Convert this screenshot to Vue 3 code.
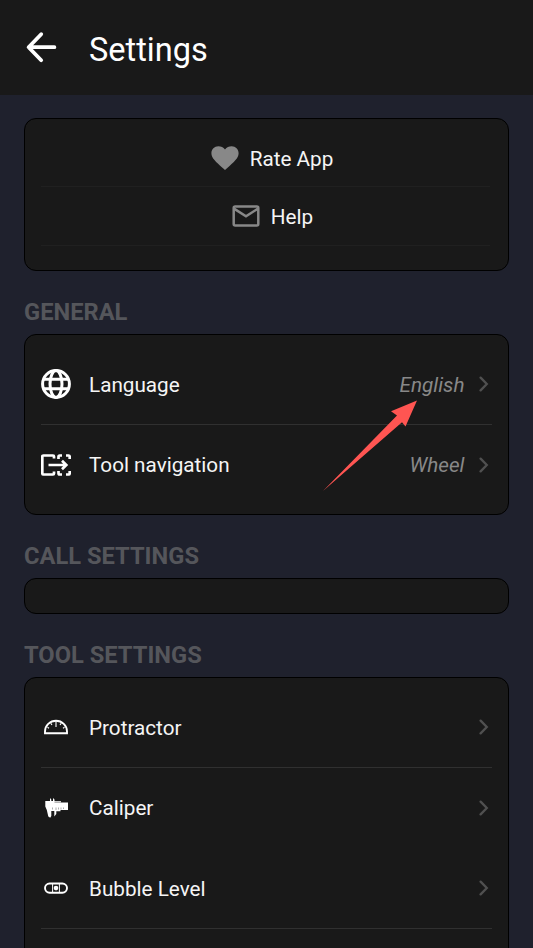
<script setup>
const general = [
  { icon: 'globe', label: 'Language', value: 'English', line: true },
  { icon: 'nav', label: 'Tool navigation', value: 'Wheel', line: false },
]
const tools = [
  { icon: 'protractor', label: 'Protractor', line: true },
  { icon: 'caliper', label: 'Caliper', line: false },
  { icon: 'level', label: 'Bubble Level', line: true },
]
const groups = [
  { title: 'GENERAL', rows: general, cls: 'general' },
  { title: 'CALL SETTINGS', rows: [], cls: 'call' },
  { title: 'TOOL SETTINGS', rows: tools, cls: 'tools' },
]
</script>

<template>
  <div class="screen">
    <header class="bar">
      <svg class="back" width="32" height="32" viewBox="0 0 32 32">
        <path d="M16.2 3.2L3.6 16.2L16.2 29.2M3.8 16.2H29.400" fill="none" stroke="#fff" stroke-width="3.8" stroke-linecap="round" stroke-linejoin="round" />
      </svg>
      <h1>Settings</h1>
    </header>

    <main>
      <section class="card actions">
        <div class="action rate">
          <svg width="28" height="24" viewBox="0 0 28 24">
            <path d="M14 24L12 22.2C4.8 15.7 .4 12 .4 7.2C.4 3.3 3.4 .3 7.4 .3C9.9 .3 12.4 1.500 14 3.400C15.600 1.500 18.100 .3 20.600 .3C24.600 .3 27.600 3.300 27.600 7.200C27.600 12 23.200 15.700 16 22.200Z" fill="#888" />
          </svg>
          <span>Rate App</span>
        </div>
        <div class="action help">
          <svg width="28" height="22" viewBox="0 0 28 22">
            <rect x="1.700" y="1.500" width="24.600" height="18.900" rx="1.500" fill="none" stroke="#888" stroke-width="2.500" />
            <path d="M2 3.600L14 11.200L26 3.600" fill="none" stroke="#888" stroke-width="2.500" />
          </svg>
          <span>Help</span>
        </div>
      </section>

      <template v-for="g in groups" :key="g.title">
        <h2>{{ g.title }}</h2>
        <section class="card" :class="g.cls">
          <div v-for="r in g.rows" :key="r.label" class="row" :class="{ line: r.line }">
            <svg class="icon" width="30" height="30" viewBox="0 0 30 30">
              <g v-if="r.icon === 'globe'" fill="none" stroke="#fff" stroke-width="3">
                <circle cx="15" cy="15" r="13.400" />
                <ellipse cx="15" cy="15" rx="6" ry="13.400" />
                <path d="M2.500 10.300H27.500M2.500 19.700H27.500" />
              </g>
              <g v-else-if="r.icon === 'nav'" fill="none" stroke="#fff" stroke-width="2.700">
                <path d="M13 8.500V6.500Q13 5.500 12 5.500H2.500Q1.300 5.500 1.300 6.700V23.300Q1.300 24.500 2.500 24.500H12Q13 24.500 13 23.500V21.500" />
                <path d="M17.500 9V6.700Q17.500 5.500 18.700 5.500H21M25 5.500H27.500Q28.700 5.500 28.700 6.700V9M28.700 21V23.300Q28.700 24.500 27.500 24.500H25M21 24.500H18.700Q17.500 24.500 17.500 23.300V21" />
                <path d="M7.500 15H25M21 10.800L25.300 15L21 19.200" />
              </g>
              <g v-else-if="r.icon === 'protractor'" fill="none" stroke="#fff">
                <path d="M4 21.200V19.500C4 13.500 9 8.800 15 8.800S26 13.500 26 19.500V21.200Z" stroke-width="1.900" />
                <path d="M15 9V15M9.800 11.200L11 13M20.200 11.200L19 13M6.500 15.300L8 16.200M23.500 15.300L22 16.200" stroke-width="1.100" />
              </g>
              <g v-else-if="r.icon === 'caliper'">
                <path d="M4.300 8H9V5L10.300 6.500V8H12V5L13.500 6.500V8H20V9.600H27V17H19.500V18.300H15.300V21L13.300 23.500V18H10.300V23L9.200 24.800L7.300 23.500L5.800 17L4.300 13.500Z" fill="#fff" />
                <path d="M13.500 9.100H20" stroke="#666" stroke-width=".8" />
                <path d="M11.500 14.500V16.500M15 14.500V17M17.500 14.500V16.500M20 14.500V16.500M22.500 14.500V16" stroke="#888" stroke-width=".7" />
              </g>
              <g v-else fill="none" stroke="#fff">
                <rect x="4" y="10.500" width="22" height="9.200" rx="4.600" stroke-width="1.900" />
                <path d="M11.600 10.500V19.700M18.400 10.500V19.700" stroke-width="1" />
                <circle cx="15" cy="15.100" r="2.300" fill="#fff" stroke="none" />
              </g>
            </svg>
            <span class="label">{{ r.label }}</span>
            <span v-if="r.value" class="value">{{ r.value }}</span>
            <svg class="chev" width="10" height="16" viewBox="0 0 10 16">
              <path d="M1.600 1.600L7.800 8L1.600 14.400" fill="none" stroke="#505050" stroke-width="2.300" stroke-linecap="round" />
            </svg>
          </div>
        </section>
      </template>
    </main>

    <svg class="pointer" width="96" height="94" viewBox="0 0 96 94">
      <path d="M95 0.500L69 11.200L75 15.400L1 91L80 22.200L83.500 26.500Z" fill="#ff5552" />
    </svg>
  </div>
</template>

<style>
body { background: #1f212d; overflow: hidden; }
</style>

<style scoped>
.screen {
  position: relative;
  height: 948px;
  overflow: hidden;
  background: #1f212d;
  color: #f5f5f5;
  font-family: Roboto, sans-serif;
  font-size: 20.700px;
  line-height: 24px;
}
.bar {
  box-sizing: border-box;
  height: 95px;
  padding: 3px 25px 0;
  display: flex;
  align-items: center;
  gap: 32px;
  background: #191919;
}
.back { margin-bottom: 4px; }
h1 {
  margin: 0;
  padding-top: 2px;
  color: #fff;
  font-size: 32.500px;
  line-height: 40px;
  font-weight: 400;
}
main { padding: 23px 24px 0; }
.card {
  box-sizing: border-box;
  background: #191919;
  border: 1px solid #000;
  border-radius: 12px;
}
.actions { height: 153px; padding: 9px 18px 0 16px; }
.action {
  box-sizing: border-box;
  height: 59px;
  display: flex;
  align-items: center;
  justify-content: center;
  gap: 11px;
  border-bottom: 1px solid #202020;
}
.rate { padding: 1px 0 0 13px; }
.help { padding: 0 0 0 14px; }
.action span { padding-top: 2px; }
h2 {
  margin: 0;
  padding-top: 24px;
  height: 39px;
  color: #55565b;
  font-size: 23.700px;
  line-height: 34px;
  font-weight: 700;
}
.general { height: 181px; padding: 9px 16px 0; }
.call { height: 36px; }
.tools { height: 300px; padding: 9px 16px 0; }
.row {
  box-sizing: border-box;
  height: 80.500px;
  padding-top: 1px;
  display: flex;
  align-items: center;
  border-bottom: 1px solid transparent;
}
.row.line { border-bottom-color: #303030; }
.icon { margin-right: 18px; }
.label { flex: 1; padding-top: 1px; }
.value { color: #888; font-style: italic; margin-right: 14.500px; padding-top: 1px; }
.chev { margin-right: 3px; }
.pointer { position: absolute; left: 322px; top: 400px; }
</style>
